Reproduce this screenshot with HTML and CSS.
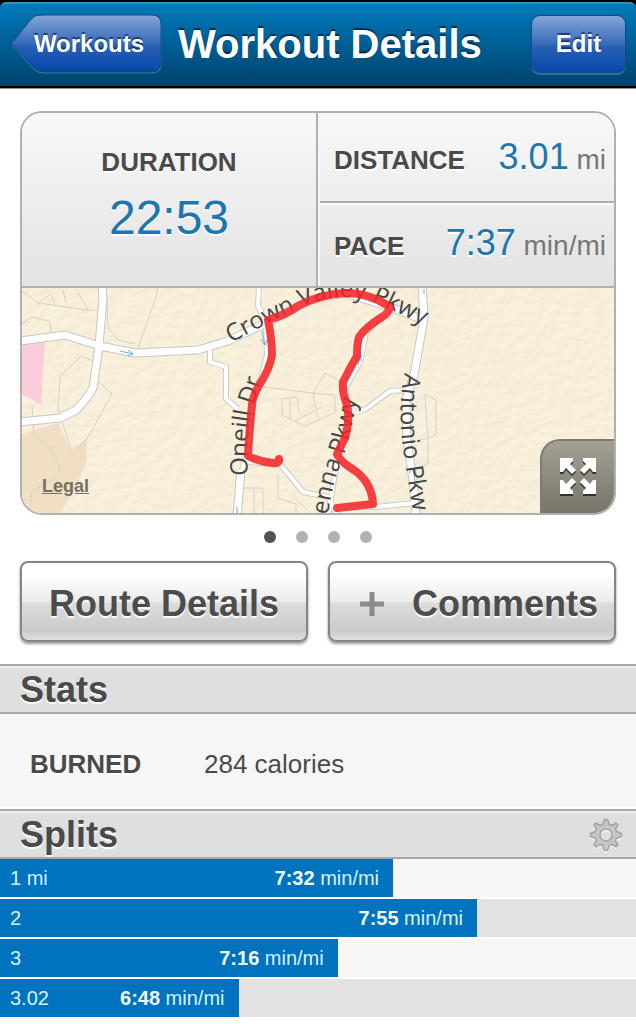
FILE: index.html
```html
<!DOCTYPE html>
<html lang="en">
<head>
<meta charset="utf-8">
<meta name="viewport" content="width=device-width, initial-scale=1">
<title>Workout Details</title>
<link rel="stylesheet" href="styles.css">
</head>
<body>
<div class="header-frame">
<header class="header">
  <button class="back" type="button">
    <svg class="back-shape" viewBox="0 0 152 60" aria-hidden="true">
      <defs>
        <linearGradient id="backFill" x1="0" y1="0" x2="0" y2="1">
          <stop offset="0" stop-color="#85a5d7"/>
          <stop offset="0.5" stop-color="#386bba"/>
          <stop offset="0.55" stop-color="#2960b5"/>
          <stop offset="1" stop-color="#0648ac"/>
        </linearGradient>
      </defs>
      <path d="M2 31C10 23 19 8 26 3Q28 2 34 2H142Q151 2 151 11V50Q151 59 142 59H34Q28 59 25 56C18 50 10 38 2 31Z" fill="none" stroke="#3b83b6"/>
      <path d="M1 29C9 22 18 7 25 2Q28 1 33 1H142Q151 1 151 10V48Q151 57 142 57H33Q28 57 25 54C18 48 9 36 1 29Z" fill="url(#backFill)" stroke="#174982"/>
    </svg>
    <span class="back-label">Workouts</span>
  </button>
  <h1 class="title">Workout Details</h1>
  <button class="edit" type="button">Edit</button>
</header>
</div>

<main>
<section class="overview">
  <div class="card">
    <div class="metrics">
      <div class="metric metric-main">
        <span class="label">DURATION</span>
        <span class="duration">22:53</span>
      </div>
      <div class="metric-side">
        <div class="metric metric-row">
          <span class="label">DISTANCE</span>
          <span class="unit"><span class="number">3.01</span> mi</span>
        </div>
        <div class="metric metric-row metric-last">
          <span class="label">PACE</span>
          <span class="unit"><span class="number">7:37</span> min/mi</span>
        </div>
      </div>
    </div>
    <div class="map">
      <svg class="map-art" viewBox="22 288 592 225" preserveAspectRatio="xMidYMid slice" role="img" aria-label="Route map">
        <defs>
          <filter id="paper" x="0" y="0" width="1" height="1">
            <feTurbulence type="fractalNoise" baseFrequency="0.09 0.13" numOctaves="2" seed="4" result="n"/>
            <feDiffuseLighting in="n" surfaceScale="1" diffuseConstant="1.12" lighting-color="#f9f0da">
              <feDistantLight azimuth="235" elevation="62"/>
            </feDiffuseLighting>
          </filter>
          <path id="crown" d="M231 343Q262 326 293 311Q318 298 345 297Q362 297 377 303L432 329"/>
          <path id="oneill" d="M248 476Q246 440 251 412L266 366"/>
          <path id="vienna" d="M328 515Q331 490 340 465Q351 440 358 390"/>
          <path id="antonio" d="M405 373Q398 400 402 440Q406 470 416 530"/>
          <g id="roads">
            <path d="M20 341L65 335L100 346L135 353L198 350L228 341L268 322L310 300L345 293L390 307L424 320"/>
            <path d="M102 286L103 298L99 346L93 388Q86 400 76 410L60 418L20 422"/>
            <path d="M422 286L424 318L414 375L406 400L407 440L413 480L416 516"/>
            <path d="M241 470L237 516"/>
          </g>
          <g id="lanes">
            <path d="M259 286L258 306L266 322L267 355L262 375L252 400L248 450L242 470"/>
            <path d="M210 350V362L226 367V399L238 409"/>
            <path d="M246 462L280 464L303 492L328 497L338 516"/>
            <path d="M390 307L366 333L360 362L345 388L350 415L338 455L328 516"/>
            <path d="M357 412L366 409L390 391L412 390"/>
            <path d="M337 508L375 507L415 503"/>
          </g>
        </defs>
        <rect x="22" y="288" width="592" height="226" fill="#f8f0db"/>
        <rect x="22" y="288" width="592" height="226" filter="url(#paper)" opacity=".35"/>
        <path d="M22 434L58 423L72 451L87 439L86 464L76 486L60 514H22Z" fill="#f0dfc4"/>
        <path d="M22 344L45 342L41 405L22 394Z" fill="#fbcddb"/>
        <g fill="none" stroke="#d4d2c6">
          <path d="M22 291L38 303L88 310H98M38 303L51 294L56 307M63 290L66 303M76 289L88 310M22 324L32 317L49 321L52 334"/>
          <path d="M107 300L108 328L118 340L135 344M157 288V294L138 348M93 361L81 356L60 376L58 410L72 451L87 439L112 394L99 382"/>
          <path d="M32 405L34 434L52 450L60 468L53 480L32 491L29 514"/>
          <path d="M263 387L313 393L325 373L342 382M313 393L334 395L336 412L305 426L282 415V399L297 397L299 412M290 399V420M295 421L322 407M313 393L318 418"/>
          <path d="M424 394L436 400V435L409 444M425 396L428 440V464L416 468M244 488H263V514M254 488V514M278 475V498L296 504V514M295 499L307 510"/>
        </g>
        <use href="#roads" fill="none" stroke="#c5c8c3" stroke-width="9" stroke-linejoin="round"/>
        <use href="#lanes" fill="none" stroke="#cbcdc5" stroke-width="6" stroke-linejoin="round"/>
        <use href="#roads" fill="none" stroke="#fff" stroke-width="7" stroke-linejoin="round"/>
        <use href="#lanes" fill="none" stroke="#fff" stroke-width="4" stroke-linejoin="round"/>
        <g fill="none" stroke="#6ab2dc">
          <path d="M120 351L133 354M128 350L133 354L128 356M262 331L265 345M261 339L265 345L267 340M358 365L361 355M355 358L361 355V361M424 289V294M413 468L415 481M409 473L413 468L416 473M237 507V513"/>
        </g>
        <g class="map-text">
          <text><textPath href="#crown">Crown Valley Pkwy</textPath></text>
          <text><textPath href="#oneill">Oneill Dr</textPath></text>
          <text><textPath href="#vienna">enna Pkwy</textPath></text>
          <text><textPath href="#antonio">Antonio Pkw</textPath></text>
        </g>
        <path d="M279 459Q280 464 273 463Q260 462 248 456Q249 435 252 405Q252 399 258 387Q270 369 272 355Q272 340 268 320Q286 315 298 306Q318 295 345 293Q370 293 390 307Q388 314 382 317Q366 327 359 337Q357 343 357 356Q350 368 343 382Q342 391 346 402Q351 418 345 438L337 454Q341 462 351 468Q372 481 373 504L337 508" fill="none" stroke="#f4262a" stroke-opacity=".88" stroke-width="8" stroke-linejoin="round" stroke-linecap="round"/>
      </svg>
      <a class="legal" href="#legal">Legal</a>
      <button class="expand" type="button" aria-label="Expand map">
        <svg class="expand-icon" viewBox="0 0 36 38" aria-hidden="true">
          <defs>
            <path id="arrow" d="M0 0H13V3L10 6L16 12L12 16L6 10L3 14H0Z"/>
            <g id="arrows">
              <use href="#arrow"/>
              <use href="#arrow" transform="translate(36 0) scale(-1 1)"/>
              <use href="#arrow" transform="translate(0 36) scale(1 -1)"/>
              <use href="#arrow" transform="translate(36 36) scale(-1 -1)"/>
            </g>
          </defs>
          <use href="#arrows" y="2" fill="#33322e"/>
          <use href="#arrows" fill="#fff"/>
        </svg>
      </button>
    </div>
  </div>

  <div class="dots" aria-label="Page 1 of 4">
    <span class="dot dot-current"></span><span class="dot"></span><span class="dot"></span><span class="dot"></span>
  </div>

  <div class="actions">
    <button class="action" type="button">Route Details</button>
    <button class="action action-icon" type="button">
      <svg class="plus" viewBox="0 0 24 24" aria-hidden="true"><path d="M12 0V24M0 12H24" stroke="#8b8b8b" stroke-width="5"/></svg>
      Comments
    </button>
  </div>
</section>

<section>
  <div class="section-bar"><h2 class="section-title">Stats</h2></div>
  <dl class="stat">
    <dt class="label">BURNED</dt>
    <dd class="stat-value">284 calories</dd>
  </dl>
</section>

<section>
  <div class="section-bar">
    <h2 class="section-title">Splits</h2>
    <button class="settings" type="button" aria-label="Split settings">
      <svg class="gear" viewBox="-18 -18 36 36" aria-hidden="true">
        <defs>
          <path id="gearShape" fill-rule="evenodd" d="M-1.500 -15.500H1.500L3.500 -10.500L6 -9.500L10 -12L12 -10L9.500 -6L10.500 -3.500L15.500 -1.500V1.500L10.500 3.500L9.500 6L12 10L10 12L6 9.500L3.500 10.500L1.500 15.500H-1.500L-3.500 10.500L-6 9.500L-10 12L-12 10L-9.500 6L-10.500 3.500L-15.500 1.500V-1.500L-10.500 -3.500L-9.500 -6L-12 -10L-10 -12L-6 -9.500L-3.500 -10.500ZM0 -6A6 6 0 1 0 0 6A6 6 0 1 0 0 -6Z"/>
        </defs>
        <use href="#gearShape" y="1.500" fill="#fff" stroke="#fff"/>
        <use href="#gearShape" fill="#c6c6c6" stroke="#a2a2a2" stroke-width="1.500" stroke-linejoin="round"/>
      </svg>
    </button>
  </div>
  <ol class="splits">
    <li class="split"><div class="bar" style="width:61.8%"><span>1 mi</span><span><b class="pace">7:32</b> min/mi</span></div></li>
    <li class="split"><div class="bar" style="width:75%"><span>2</span><span><b class="pace">7:55</b> min/mi</span></div></li>
    <li class="split"><div class="bar" style="width:53.1%"><span>3</span><span><b class="pace">7:16</b> min/mi</span></div></li>
    <li class="split"><div class="bar" style="width:37.5%"><span>3.02</span><span><b class="pace">6:48</b> min/mi</span></div></li>
  </ol>
</section>
</main>
</body>
</html>
```

FILE: styles.css
```css
* {
  box-sizing: border-box;
}

body {
  margin: 0;
  background: #fff;
  color: #4a4a4a;
  font-family: "Liberation Sans", Arial, sans-serif;
}

button {
  font: inherit;
  margin: 0;
  padding: 0;
  border: 0;
  background: none;
  cursor: pointer;
}

/* Header */
.header-frame {
  padding: 2px 0;
  background: #000;
  border-bottom: 1px solid #8b9298;
}

.header {
  display: flex;
  align-items: center;
  gap: 16px;
  height: 84px;
  padding: 0 10px 2px;
  border-top: 2px solid #2397be;
  border-radius: 6px 6px 0 0;
  background: linear-gradient(#007abb, #00426d);
}

.back {
  position: relative;
  flex: none;
  width: 152px;
  height: 60px;
  padding: 0 17px 0 23px;
}

.back-shape {
  position: absolute;
  inset: 0;
  width: 100%;
  height: 100%;
}

.back-label {
  position: relative;
}

.back,
.edit {
  color: #fff;
  font-size: 24px;
  font-weight: bold;
  text-shadow: 0 -2px 1px rgba(0, 20, 70, 0.6);
}

.title {
  flex: 1;
  margin: 0;
  color: #fff;
  font-size: 40px;
  line-height: 48px;
  white-space: nowrap;
  text-shadow: 0 -2px 1px rgba(0, 20, 50, 0.7);
}

.edit {
  flex: none;
  width: 95px;
  height: 58px;
  border: 1px solid #174982;
  border-radius: 9px;
  background: linear-gradient(#85a5d7, #386bba 50%, #2960b5 55%, #0648ac);
  box-shadow: 0 2px 0 #2c719f;
}

/* Overview card */
.overview {
  padding: 22px 20px;
}

.card {
  overflow: hidden;
  border: 2px solid #b0b0b0;
  border-radius: 22px;
}

.metrics {
  display: grid;
  grid-template-columns: 1fr 1fr;
  background: linear-gradient(#f8f8f8, #e3e3e3);
  border-bottom: 2px solid #b0b0b0;
}

.metric-main {
  display: flex;
  flex-direction: column;
  align-items: center;
  gap: 12px;
  padding: 33px 0 40px;
  border-right: 2px solid #b0b0b0;
}

.metric-side {
  display: grid;
  grid-template-rows: 90px 1fr;
  border-left: 2px solid #f6f6f6;
}

.metric-row {
  display: flex;
  align-items: baseline;
  justify-content: space-between;
  padding: 20px 8px 0 14px;
  border-bottom: 2px solid #b0b0b0;
}

.metric-last {
  padding-top: 14px;
  border-top: 2px solid #fafafa;
  border-bottom: 0;
}

.label {
  font-size: 26px;
  font-weight: bold;
  line-height: 32px;
  text-shadow: 0 2px 0 #fff;
}

.duration,
.number {
  color: #1c76b0;
  text-shadow: 0 2px 0 #fff;
}

.duration {
  font-size: 48px;
  line-height: 56px;
}

.number {
  font-size: 36px;
  line-height: 48px;
}

.unit {
  color: #777;
  font-size: 28px;
  white-space: nowrap;
}

/* Map */
.map {
  position: relative;
}

.map-art {
  display: block;
  width: 100%;
}

.map-text {
  fill: #454545;
  font-family: "Open Sans", "Noto Sans", sans-serif;
  font-size: 24px;
  font-weight: 500;
}

.legal {
  position: absolute;
  left: 20px;
  bottom: 16px;
  color: #756f63;
  font-size: 18px;
  font-weight: bold;
  line-height: 22px;
}

.expand {
  position: absolute;
  right: 0;
  bottom: 0;
  display: flex;
  align-items: center;
  justify-content: center;
  width: 74px;
  height: 74px;
  border: 2px solid #7e7c71;
  border-width: 2px 0 0 2px;
  border-radius: 20px 0 0 0;
  background: linear-gradient(#a3a194, #77756a);
}

.expand-icon {
  width: 36px;
  height: 38px;
}

/* Page dots */
.dots {
  display: flex;
  justify-content: center;
  gap: 20px;
  padding: 16px 0 18px;
}

.dot {
  width: 12px;
  height: 12px;
  border-radius: 50%;
  background: #b1b1b1;
}

.dot-current {
  background: #525252;
}

/* Actions */
.actions {
  display: grid;
  grid-template-columns: 1fr 1fr;
  gap: 20px;
}

.action {
  display: flex;
  align-items: center;
  justify-content: center;
  height: 81px;
  padding-top: 4px;
  border: 2px solid #858585;
  border-radius: 8px;
  background: linear-gradient(#fff 15%, #ebebeb 50%, #dcdcdc 52%, #cbcbcb 88%, #e0e0e0);
  box-shadow: 0 2px 3px rgba(0, 0, 0, 0.4);
  color: #4d4d4d;
  font-size: 36px;
  font-weight: bold;
  text-shadow: 0 2px 0 #fff;
}

.action-icon {
  justify-content: flex-start;
  gap: 28px;
  padding-left: 30px;
}

.plus {
  width: 24px;
  height: 24px;
}

/* Sections */
.section-bar {
  display: flex;
  align-items: center;
  justify-content: space-between;
  height: 50px;
  padding: 2px 12px 0 20px;
  border-top: 2px solid #a8a8a8;
  border-bottom: 2px solid #a8a8a8;
  background: #dfdfdf;
  box-shadow: inset 0 2px 0 #ededed;
}

.section-title {
  margin: 0;
  font-size: 36px;
  line-height: 44px;
  text-shadow: 0 2px 0 #fff;
}

.stat {
  display: grid;
  grid-template-columns: 174px 1fr;
  align-items: center;
  height: 95px;
  margin: 0;
  padding: 6px 30px 0;
  border-bottom: 2px solid #fff;
  background: #f6f6f6;
}

.stat-value {
  margin: 0;
  font-size: 26px;
  line-height: 32px;
}

.settings {
  display: flex;
}

.gear {
  width: 36px;
  height: 36px;
}

/* Splits */
.splits {
  display: grid;
  gap: 2px;
  margin: 0;
  padding: 0;
  list-style: none;
}

.split {
  background: #f6f6f6;
}

.split:nth-child(even) {
  background: #e2e2e2;
}

.bar {
  display: flex;
  justify-content: space-between;
  padding: 0 14px 0 10px;
  background: #0073bf;
  color: #d5f1ff;
  font-size: 20px;
  line-height: 38px;
  white-space: nowrap;
}

.pace {
  color: #f0fbff;
}
```
